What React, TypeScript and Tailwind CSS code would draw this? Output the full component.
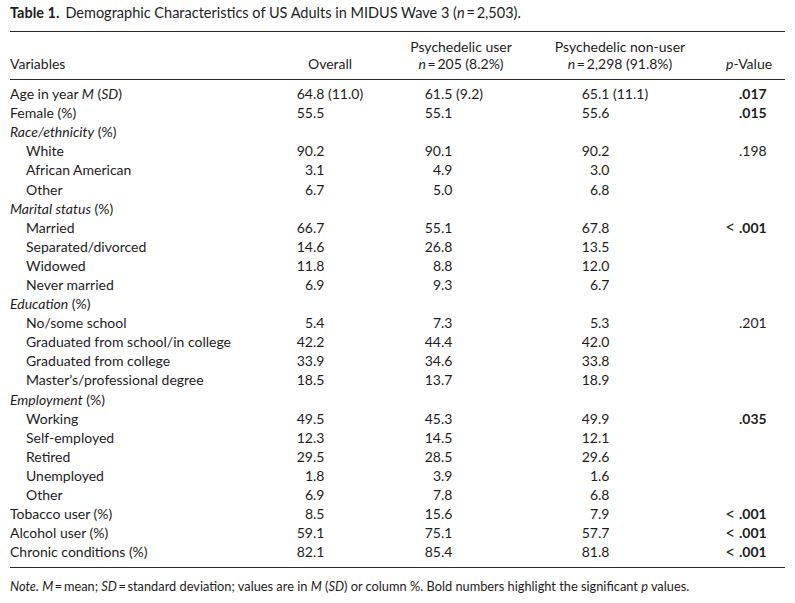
import React from "react";

type Row = {
  label: React.ReactNode;
  kind: "main" | "head" | "sub";
  vals?: [string, string, string];
  p?: string;
  bold?: boolean;
};

const I = ({ children }: { children: React.ReactNode }) => <i>{children}</i>;

const rows: Row[] = [
  { label: <>Age in year <I>M</I> (<I>SD</I>)</>, kind: "main", vals: ["64.8 (11.0)", "61.5 (9.2)", "65.1 (11.1)"], p: ".017", bold: true },
  { label: "Female (%)", kind: "main", vals: ["55.5", "55.1", "55.6"], p: ".015", bold: true },
  { label: <><I>Race/ethnicity</I> (%)</>, kind: "head" },
  { label: "White", kind: "sub", vals: ["90.2", "90.1", "90.2"], p: ".198" },
  { label: "African American", kind: "sub", vals: ["3.1", "4.9", "3.0"] },
  { label: "Other", kind: "sub", vals: ["6.7", "5.0", "6.8"] },
  { label: <><I>Marital status</I> (%)</>, kind: "head" },
  { label: "Married", kind: "sub", vals: ["66.7", "55.1", "67.8"], p: "<.001", bold: true },
  { label: "Separated/divorced", kind: "sub", vals: ["14.6", "26.8", "13.5"] },
  { label: "Widowed", kind: "sub", vals: ["11.8", "8.8", "12.0"] },
  { label: "Never married", kind: "sub", vals: ["6.9", "9.3", "6.7"] },
  { label: <><I>Education</I> (%)</>, kind: "head" },
  { label: "No/some school", kind: "sub", vals: ["5.4", "7.3", "5.3"], p: ".201" },
  { label: "Graduated from school/in college", kind: "sub", vals: ["42.2", "44.4", "42.0"] },
  { label: "Graduated from college", kind: "sub", vals: ["33.9", "34.6", "33.8"] },
  { label: "Master\u2019s/professional degree", kind: "sub", vals: ["18.5", "13.7", "18.9"] },
  { label: <><I>Employment</I> (%)</>, kind: "head" },
  { label: "Working", kind: "sub", vals: ["49.5", "45.3", "49.9"], p: ".035", bold: true },
  { label: "Self-employed", kind: "sub", vals: ["12.3", "14.5", "12.1"] },
  { label: "Retired", kind: "sub", vals: ["29.5", "28.5", "29.6"] },
  { label: "Unemployed", kind: "sub", vals: ["1.8", "3.9", "1.6"] },
  { label: "Other", kind: "sub", vals: ["6.9", "7.8", "6.8"] },
  { label: "Tobacco user (%)", kind: "main", vals: ["8.5", "15.6", "7.9"], p: "<.001", bold: true },
  { label: "Alcohol user (%)", kind: "main", vals: ["59.1", "75.1", "57.7"], p: "<.001", bold: true },
  { label: "Chronic conditions (%)", kind: "main", vals: ["82.1", "85.4", "81.8"], p: "<.001", bold: true },
];

function Dec({ v, w, bold }: { v: string; w: string; bold?: boolean }) {
  const i = v.indexOf(".");
  const a = v.slice(0, i);
  const b = v.slice(i);
  return (
    <div className="flex items-center">
      <span className={`${w} text-right shrink-0`}>
        {a === "<" ? (
          <span className="text-[17px] leading-[17px] font-normal pr-[4px]">{"<"}</span>
        ) : (
          a
        )}
      </span>
      <span className={bold ? "font-bold" : ""}>{b}</span>
    </div>
  );
}

export default function App() {
  return (
    <div
      className="w-[795px] h-[603px] bg-white text-[#1e1c1d] px-[10px] pt-[4px]"
      style={{ fontFamily: "Lato, 'Open Sans', sans-serif" }}
    >
      <div className="text-[14.5px] leading-[18px]">
        <span className="font-bold">Table 1.</span>
        <span className="ml-[6px]">
          Demographic Characteristics of US Adults in MIDUS Wave 3 (<I>n</I>{"\u2009=\u2009"}2,503).
        </span>
      </div>
      <div className="mt-[9px] h-px bg-[#2a2a2a]" />
      <div className="grid grid-cols-[260px_130px_140px_160px_85px] text-[14px] leading-[17px] pt-[6px] pb-[7px]">
        <div className="flex items-end">Variables</div>
        <div className="flex items-end pl-[38px]">Overall</div>
        <div className="flex flex-col items-center pr-[18px]">
          <span>Psychedelic user</span>
          <span>
            <I>n</I>{"\u2009=\u2009"}205 (8.2%)
          </span>
        </div>
        <div className="flex flex-col items-center">
          <span>Psychedelic non-user</span>
          <span>
            <I>n</I>{"\u2009=\u2009"}2,298 (91.8%)
          </span>
        </div>
        <div className="flex items-end pl-[26px]">
          <span>
            <I>p</I>-Value
          </span>
        </div>
      </div>
      <div className="h-px bg-[#2a2a2a]" />
      <div className="pt-[4px] pb-[6px]">
        {rows.map((r, idx) => (
          <div
            key={idx}
            className="grid grid-cols-[260px_130px_140px_160px_85px] h-[19.1px] items-center text-[14px] leading-[17px]"
          >
            <div className={r.kind === "sub" ? "pl-[16px]" : ""}>{r.label}</div>
            {r.vals ? (
              <>
                <Dec v={r.vals[0]} w="w-[43px]" />
                <Dec v={r.vals[1]} w="w-[41px]" />
                <Dec v={r.vals[2]} w="w-[58px]" />
              </>
            ) : (
              <>
                <div />
                <div />
                <div />
              </>
            )}
            {r.p ? <Dec v={r.p} w="w-[39px]" bold={r.bold} /> : <div />}
          </div>
        ))}
      </div>
      <div className="h-px bg-[#2a2a2a]" />
      <div className="pt-[10px] text-[12.8px] leading-[16px]">
        <I>Note.</I> <I>M</I>
        {"\u2009=\u2009"}mean; <I>SD</I>
        {"\u2009=\u2009"}standard deviation; values are in <I>M</I> (<I>SD</I>) or column %. Bold numbers highlight
        the significant <I>p</I> values.
      </div>
    </div>
  );
}
